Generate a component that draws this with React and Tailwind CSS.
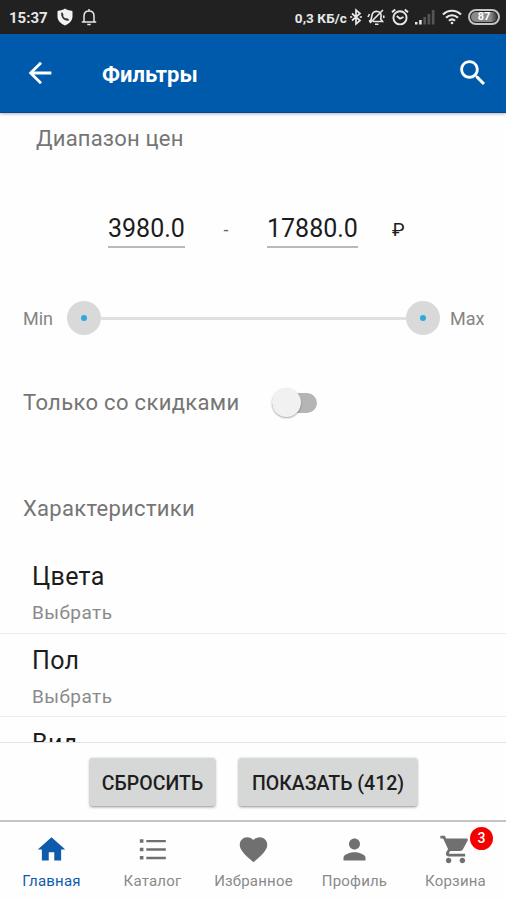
import React, { useState } from 'react'

const ICONS = {
  back: 'M20 11H7.83l5.59-5.59L12 4l-8 8 8 8 1.41-1.41L7.83 13H20v-2z',
  search: 'M15.5 14h-.79l-.28-.27C15.41 12.59 16 11.11 16 9.5 16 5.91 13.09 3 9.5 3S3 5.91 3 9.5 5.91 16 9.5 16c1.61 0 3.09-.59 4.23-1.57l.27.28v.79l5 4.99L20.49 19l-4.99-5zm-6 0C7.01 14 5 11.99 5 9.500S7.01 5 9.500 5 14 7.01 14 9.500 11.99 14 9.500 14z',
  home: 'M10 20v-6h4v6h5v-8h3L12 3 2 12h3v8z',
  list: 'M2.8 4.600h2.600v2.500H2.800zM7.500 5h14.200v1.800H7.500zM2.800 10.700h2.600v2.500H2.800zM7.500 11.100h14.200v1.800H7.500zM2.800 16.800h2.600v2.500H2.800zM7.500 17.200h14.200V19H7.500z',
  heart: 'M12 21.35l-1.45-1.32C5.4 15.36 2 12.28 2 8.5 2 5.42 4.42 3 7.5 3c1.74 0 3.41.81 4.5 2.09C13.09 3.81 14.76 3 16.5 3 19.58 3 22 5.42 22 8.5c0 3.78-3.4 6.86-8.55 11.54L12 21.35z',
  person: 'M12 12c2.21 0 4-1.79 4-4s-1.79-4-4-4-4 1.79-4 4 1.79 4 4 4zm0 2c-2.67 0-8 1.34-8 4v2h16v-2c0-2.66-5.33-4-8-4z',
  cart: 'M7 18c-1.1 0-1.99.9-1.99 2S5.9 22 7 22s2-.9 2-2-.9-2-2-2zM1 2v2h2l3.6 7.59-1.35 2.45c-.16.28-.25.61-.25.96 0 1.1.9 2 2 2h12v-2H7.42c-.14 0-.25-.11-.25-.25l.03-.12.9-1.63h7.45c.75 0 1.41-.41 1.75-1.03l3.58-6.49c.08-.14.12-.31.12-.48 0-.55-.45-1-1-1H5.21l-.94-2H1zm16 16c-1.1 0-1.99.9-1.99 2s.89 2 1.99 2 2-.9 2-2-.9-2-2-2z'
}

const TABS = [
  { id: 'home', label: 'Главная' },
  { id: 'list', label: 'Каталог' },
  { id: 'heart', label: 'Избранное' },
  { id: 'person', label: 'Профиль' },
  { id: 'cart', label: 'Корзина', badge: 3 }
]

const FILTERS = [
  { title: 'Цвета', value: 'Выбрать' },
  { title: 'Пол', value: 'Выбрать' },
  { title: 'Вид' }
]

function Icon({ name, className }) {
  return (
    <svg viewBox="0 0 24 24" fill="currentColor" className={className}>
      <path d={ICONS[name]} />
    </svg>
  )
}

function StatusBar() {
  return (
    <div className="h-[34px] shrink-0 bg-[#212121] text-[#e8e8e8] flex items-center pl-[9px] pr-[6px]">
      <span className="text-[15px] leading-[20px] pt-px font-bold">15:37</span>
      <svg viewBox="0 0 16 18" className="ml-[9px] w-4 h-[18px]">
        <path fill="#f2f2f2" d="M8 .5c2 1.500 4.200 2 6.500 2.200.8 0 1 .5 1 1.200v4.600c0 4.300-3.500 7.300-7.500 9-4-1.700-7.500-4.700-7.500-9V3.900c0-.7.2-1.200 1-1.200C3.800 2.500 6 2 8 .5z" />
        <path fill="none" stroke="#333" strokeWidth="1.800" strokeLinecap="round" d="M5 5.500c-.3 3.500 2.500 6.500 6 6.300M5 5.500l.6 1.600M11 11.800l-1.500-.8" />
      </svg>
      <svg viewBox="0 0 16 18" className="ml-[8px] w-4 h-[18px]" fill="none" stroke="currentColor" strokeWidth="1.500">
        <path d="M.8 14h14.400M3 14V8c0-3 2-5 5-5s5 2 5 5v6M8 3V1M6.300 16.400h3.400" />
      </svg>
      <div className="ml-auto flex items-center">
        <span className="text-[13.500px] leading-[20px] pt-px tracking-[0.1px] font-bold">0,3 КБ/с</span>
        <svg viewBox="0 0 12 18" className="ml-[3px] w-3 h-[18px]" fill="none" stroke="currentColor" strokeWidth="1.700">
          <path d="M2 5.500l8 7L6 16V2l4 3.500-8 7M0 9h2.200M9.800 9H12" />
        </svg>
        <svg viewBox="0 0 18 18" className="ml-[5px] w-[18px] h-[18px]" fill="none" stroke="currentColor" strokeWidth="1.600">
          <path d="M4 12l1-5c.6-2.700 3-4 5.500-3.500S14.500 6 14 9l-.3 2 1.800 2.500H6M8 16.200h3.500M16 2L3 15M1 9l1.500-3M16.500 7.500L17 10M4 12l-2 1.500" />
        </svg>
        <svg viewBox="0 0 18 18" className="ml-[6px] w-[18px] h-[18px]" fill="none" stroke="currentColor" strokeWidth="1.900">
          <circle cx="9" cy="9.800" r="6.600" />
          <path d="M1 4.300l3.200-2.800M17 4.300l-3.200-2.800M5.800 8L9 10.700 12.500 9" />
        </svg>
        <svg viewBox="0 0 20 16" className="ml-[6px] w-5 h-4" fill="currentColor">
          <path d="M0 13h2.500v2.500H0zM4.200 11h2.500v4.500H4.200z" />
          <path fill="#555" d="M8.400 8H11v7.500H8.400zM12.600 5h2.600v10.500h-2.600zM16.800 1h2.700v14.500h-2.700z" />
        </svg>
        <svg viewBox="0 0 20 16" className="ml-[7px] w-5 h-4" fill="none" stroke="currentColor" strokeWidth="2.200">
          <path d="M1 5.500c5.200-5 12.800-5 18 0M4 8.700c3.500-3.300 8.500-3.300 12 0M7 11.800c1.800-1.700 4.200-1.700 6 0" />
          <circle cx="10" cy="14" r="1.300" fill="currentColor" stroke="none" />
        </svg>
        <span className="ml-[6px] w-8 h-4 rounded-full border-2 border-[#c4c4c4] p-px flex">
          <span className="flex-1 rounded-full bg-linear-to-r from-[#8b8b8b] from-75% to-[#3c3c3c] text-[11px] leading-[10px] font-bold text-white text-center">87</span>
        </span>
      </div>
    </div>
  )
}

function RangeThumb() {
  return (
    <span className="w-[34px] h-[34px] rounded-full bg-[#d9d9d9] flex items-center justify-center">
      <span className="w-1.5 h-1.5 rounded-full bg-[#2fa9d9]" />
    </span>
  )
}

function FilterRow({ title, value }) {
  return (
    <div className="h-[83.5px] shrink-0 border-b border-[#ececec] pl-8 pt-3">
      <div className="text-[25px] leading-[30px] tracking-[0.3px] text-[#1c1c1c]">{title}</div>
      {value && <div className="mt-[9px] text-[19px] leading-[24px] tracking-[0.45px] text-[#8a8a8a]">{value}</div>}
    </div>
  )
}

export default function App() {
  const [discountOnly, setDiscountOnly] = useState(false)
  const [activeTab, setActiveTab] = useState('home')

  return (
    <div className="w-[506px] h-[900px] overflow-hidden flex flex-col bg-[#fefefe] font-['Roboto',sans-serif]">
      <StatusBar />
      <header className="h-[79px] shrink-0 bg-[#005aab] border-b border-[#004a94] shadow-[0_1px_3px_rgba(0,0,0,0.3)] flex items-center pl-[23px] pr-4 text-white">
        <Icon name="back" className="w-[34px] h-[34px]" />
        <h1 className="ml-[45px] pt-[2px] text-[22px] font-bold">Фильтры</h1>
        <Icon name="search" className="ml-auto w-[34px] h-[34px]" />
      </header>

      <main className="flex-1 min-h-0 overflow-hidden flex flex-col">
        <div className="pt-[11px] pl-9 text-[22px] leading-[30px] tracking-[0.2px] text-[#757575]">Диапазон цен</div>

        <div className="mt-[57px] pl-[108px] h-[38px] flex items-start text-[25px] leading-[36px] text-[#1c1c1c]">
          <span className="w-[77px] h-[37px] border-b-2 border-[#b9b9b9] whitespace-nowrap">3980.0</span>
          <span className="w-[82px] text-center text-lg leading-[38px] text-[#666]">-</span>
          <span className="w-[91px] h-[37px] border-b-2 border-[#b9b9b9] whitespace-nowrap">17880.0</span>
          <span className="ml-[34px] text-[19px] leading-[37px]">₽</span>
        </div>

        <div className="mt-[52px] h-[38px] flex items-center pl-[23px] text-[18px] text-[#858585]">
          <span className="w-[44px]">Min</span>
          <div className="w-[373px] flex items-center">
            <RangeThumb />
            <span className="flex-1 h-[3px] bg-[#e0e0e0]" />
            <RangeThumb />
          </div>
          <span className="ml-[10px]">Max</span>
        </div>

        <div className="mt-[51px] h-[40px] flex items-center pl-[23px] text-[22px] tracking-[0.33px] text-[#757575]">
          <span className="w-[249px]">Только со скидками</span>
          <button
            onClick={() => setDiscountOnly(!discountOnly)}
            className={`w-[45px] h-[20px] rounded-full bg-[#b5b5b5] flex items-center ${discountOnly ? 'justify-end' : ''}`}
          >
            <span className="w-[29px] h-[29px] shrink-0 rounded-full bg-[#f1f1f1] shadow-[0_1px_2px_rgba(0,0,0,0.35)]" />
          </button>
        </div>

        <div className="mt-[75px] pl-[23px] h-[30px] text-[22px] leading-[30px] tracking-[0.3px] text-[#757575]">Характеристики</div>

        <div className="mt-[26px] flex flex-col">
          {FILTERS.map(filter => (
            <FilterRow key={filter.title} title={filter.title} value={filter.value} />
          ))}
        </div>
      </main>

      <div className="h-[78px] shrink-0 border-t border-[#e2e2e2] pl-px flex items-center justify-center gap-[24px] text-[19.500px] font-medium text-[#1e1e1e]">
        <button className="w-[125px] h-[48px] pt-[4px] leading-[24px] rounded-[2px] bg-[#d6d8d7] shadow-[0_1px_3px_rgba(0,0,0,0.45)]">СБРОСИТЬ</button>
        <button className="w-[178px] h-[48px] pt-[4px] leading-[24px] rounded-[2px] bg-[#d6d8d7] shadow-[0_1px_3px_rgba(0,0,0,0.45)]">ПОКАЗАТЬ (412)</button>
      </div>

      <nav className="h-[80px] shrink-0 border-t-2 border-[#c4c4c4] pl-px flex">
        {TABS.map(tab => (
          <button
            key={tab.id}
            onClick={() => setActiveTab(tab.id)}
            className={`relative flex-1 flex flex-col items-center pt-[11px] ${activeTab === tab.id ? 'text-[#0f5bab]' : 'text-[#707070]'}`}
          >
            <Icon name={tab.id} className="w-[33px] h-[33px]" />
            <span className={`mt-[5px] text-[15px] leading-[21px] tracking-[0.2px] ${activeTab === tab.id ? '' : 'text-[#8a8a8a]'}`}>{tab.label}</span>
            {tab.badge && (
              <span className="absolute left-[65px] top-[5px] w-[23px] h-[23px] rounded-full bg-[#f40000] text-white text-[14px] font-medium leading-[23px] text-center">
                {tab.badge}
              </span>
            )}
          </button>
        ))}
      </nav>
    </div>
  )
}
